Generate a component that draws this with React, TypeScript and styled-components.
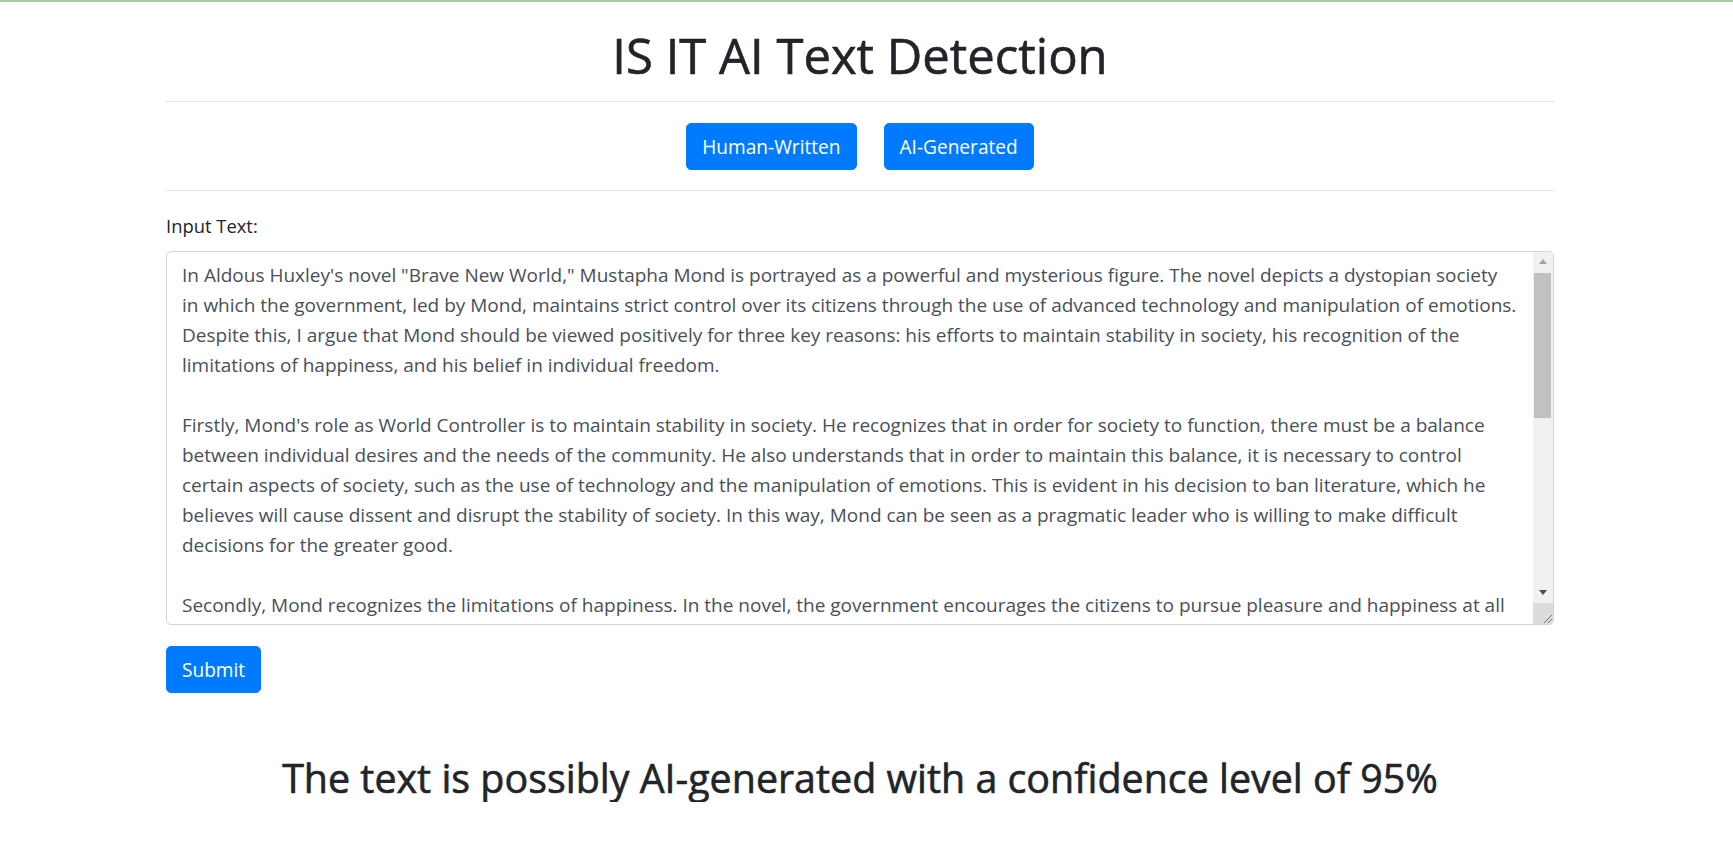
import React from "react";
import styled, { createGlobalStyle } from "styled-components";

const FONT = `"Open Sans", "Liberation Sans", sans-serif`;

const GlobalStyle = createGlobalStyle`
  html, body { margin: 0; padding: 0; background: #fff; }
  body { font-family: ${FONT}; color: #212529; }
  * { box-sizing: border-box; }
`;

const TopRule = styled.div`
  height: 2px;
  background: #a8c8a8;
`;

const Page = styled.div`
  padding-right: 13px;
`;

const Container = styled.main`
  width: 1388px;
  margin: 0 auto;
`;

const Title = styled.h1`
  margin: 0;
  height: 99px;
  padding-top: 8px;
  display: flex;
  align-items: center;
  justify-content: center;
  font-size: 49px;
  font-weight: 400;
  line-height: 1.2;
  color: #212529;
  -webkit-text-stroke: 0.6px #212529;
`;

const Divider = styled.hr`
  margin: 0;
  border: 0;
  border-top: 1px solid #e4e4e4;
`;

const ButtonRow = styled.div`
  display: flex;
  justify-content: center;
  gap: 27px;
  padding: 21px 0 20px;
`;

const Button = styled.button`
  font-family: ${FONT};
  font-size: 19.1px;
  line-height: 30px;
  padding: 7.5px 15px;
  border: 1px solid #007bff;
  border-radius: 5px;
  background: #007bff;
  color: #fff;
  cursor: pointer;
`;

const Form = styled.form`
  display: flex;
  flex-direction: column;
  align-items: flex-start;
`;

const Label = styled.label`
  margin: 20px 0 10px;
  font-size: 18.4px;
  line-height: 30px;
  color: #212529;
`;

const TextBox = styled.div`
  width: 100%;
  height: 374px;
  display: flex;
  border: 1px solid #ced4da;
  border-radius: 5px;
  overflow: hidden;
  background: #fff;
`;

const TextArea = styled.textarea`
  flex: 1;
  border: 0;
  outline: none;
  resize: none;
  padding: 8px 15px 0 15px;
  font-family: ${FONT};
  font-size: 19px;
  line-height: 30px;
  color: #495057;
  background: transparent;
  scrollbar-width: none;
  &::-webkit-scrollbar { display: none; }
`;

const ScrollBar = styled.div`
  width: 20px;
  display: flex;
  flex-direction: column;
  background: #f1f1f1;
`;

const ArrowButton = styled.div`
  height: 18px;
  display: flex;
  align-items: center;
  justify-content: center;
`;

const Track = styled.div`
  flex: 1;
  padding: 3px 2px 0 1px;
`;

const Thumb = styled.div`
  height: 145px;
  background: #c1c1c1;
`;

const Corner = styled.div`
  height: 21px;
  margin-top: 2px;
  background: #dcdcdc;
  display: flex;
  align-items: flex-end;
  justify-content: flex-end;
`;

const SubmitButton = styled(Button)`
  margin-top: 21px;
`;

const Result = styled.h3`
  margin: 62px 0 0;
  text-align: center;
  font-size: 39.4px;
  font-weight: 400;
  line-height: 1.2;
  color: #212529;
  -webkit-text-stroke: 0.6px #212529;
`;

const ESSAY = `In Aldous Huxley's novel "Brave New World," Mustapha Mond is portrayed as a powerful and mysterious figure. The novel depicts a dystopian society in which the government, led by Mond, maintains strict control over its citizens through the use of advanced technology and manipulation of emotions. Despite this, I argue that Mond should be viewed positively for three key reasons: his efforts to maintain stability in society, his recognition of the limitations of happiness, and his belief in individual freedom.

Firstly, Mond's role as World Controller is to maintain stability in society. He recognizes that in order for society to function, there must be a balance between individual desires and the needs of the community. He also understands that in order to maintain this balance, it is necessary to control certain aspects of society, such as the use of technology and the manipulation of emotions. This is evident in his decision to ban literature, which he believes will cause dissent and disrupt the stability of society. In this way, Mond can be seen as a pragmatic leader who is willing to make difficult decisions for the greater good.

Secondly, Mond recognizes the limitations of happiness. In the novel, the government encourages the citizens to pursue pleasure and happiness at all costs. However, Mond understands that true happiness cannot be achieved through constant pleasure alone, and he acknowledges the value of art, science and religion that have been sacrificed for the sake of stability.

Finally, Mond believes in individual freedom, even if he cannot grant it to everyone. He allows those who do not fit into society to live on the islands, where they can pursue their own interests freely.`;

function ScrollArrow({ up, color }: { up?: boolean; color: string }) {
  return (
    <svg width="8" height="5" viewBox="0 0 8 5">
      <polygon points={up ? "0,5 8,5 4,0" : "0,0 8,0 4,5"} fill={color} />
    </svg>
  );
}

function ResizeGrip() {
  return (
    <svg width="12" height="12" viewBox="0 0 12 12">
      <line x1="3" y1="11" x2="11" y2="3" stroke="#777" strokeWidth="1" />
      <line x1="7" y1="11" x2="11" y2="7" stroke="#777" strokeWidth="1" />
    </svg>
  );
}

export default function App() {
  return (
    <>
      <GlobalStyle />
      <TopRule />
      <Page>
        <Container>
          <Title>IS IT AI Text Detection</Title>
          <Divider />
          <ButtonRow>
            <Button type="button">Human-Written</Button>
            <Button type="button">AI-Generated</Button>
          </ButtonRow>
          <Divider />
          <Form onSubmit={(e) => e.preventDefault()}>
            <Label htmlFor="input-text">Input Text:</Label>
            <TextBox>
              <TextArea id="input-text" defaultValue={ESSAY} />
              <ScrollBar>
                <ArrowButton>
                  <ScrollArrow up color="#a3a3a3" />
                </ArrowButton>
                <Track>
                  <Thumb />
                </Track>
                <ArrowButton>
                  <ScrollArrow color="#505050" />
                </ArrowButton>
                <Corner>
                  <ResizeGrip />
                </Corner>
              </ScrollBar>
            </TextBox>
            <SubmitButton type="submit">Submit</SubmitButton>
          </Form>
          <Result>The text is possibly AI-generated with a confidence level of 95%</Result>
        </Container>
      </Page>
    </>
  );
}
